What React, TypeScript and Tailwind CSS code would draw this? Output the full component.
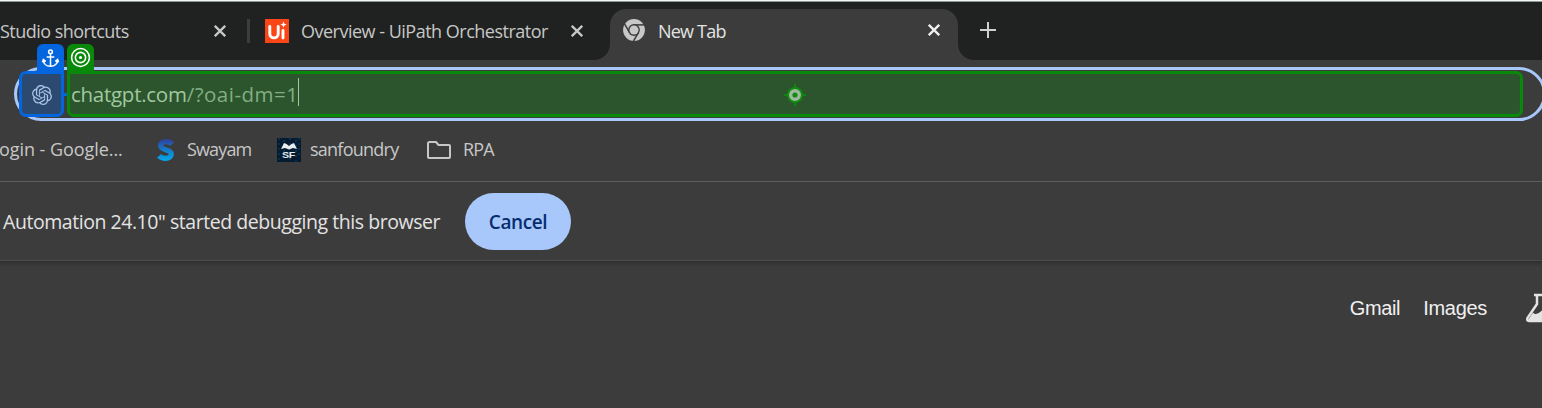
import React from "react";
import { SiOpenai } from "react-icons/si";

function Close({ className }: { className: string }) {
  return (
    <svg viewBox="0 0 12 12" className={className} fill="none" stroke="currentColor" strokeWidth="2.300">
      <path d="M.8.8 11.2 11.2M11.2.8.8 11.2" />
    </svg>
  );
}

function UiPathLogo() {
  return (
    <svg viewBox="0 0 24 24" className="mb-px ml-[15px] size-6 shrink-0">
      <path fill="#fa4616" d="M0 0h24v24H0z" />
      <path d="M4.800 7.500v7.200a4.200 4.200 0 0 0 8.400 0V7.500" fill="none" stroke="#fff" strokeWidth="2.900" strokeLinecap="round" />
      <path d="M18 11.500v7.500" stroke="#fff" strokeWidth="2.900" strokeLinecap="round" />
      <path fill="#fff" d="M18.500 2.500l.9 2.200 2.300.9-2.300.9-.9 2.300-.9-2.300-2.300-.9 2.300-.9z" />
    </svg>
  );
}

function ChromeLogo() {
  return (
    <svg viewBox="0 0 22 22" className="size-[22px] shrink-0">
      <circle cx="11" cy="11" r="10.900" fill="#c8c8c8" />
      <circle cx="11" cy="11" r="5.900" fill="#3c3c3c" />
      <g stroke="#3c3c3c" strokeWidth="1.500">
        <path d="M11 5.900h11" />
        <path d="M11 5.900h11" transform="rotate(120 11 11)" />
        <path d="M11 5.900h11" transform="rotate(240 11 11)" />
      </g>
      <circle cx="11" cy="11" r="4.500" fill="#c8c8c8" />
    </svg>
  );
}

function TabStrip() {
  return (
    <div className="flex h-[60px] shrink-0 border-t border-[#f4f6f5] bg-[#202221] text-[#c7c7c7]">
      <div className="flex h-full w-full items-center border-t border-[#8a9a94]">
        <span className="w-[214px] shrink-0 pt-px text-[18px] tracking-[-0.53px]">Studio shortcuts</span>
        <Close className="mb-px size-3 shrink-0" />
        <span className="mb-px ml-[21px] h-6 w-[3px] shrink-0 bg-[#3d3d3d]" />
        <UiPathLogo />
        <span className="ml-3 w-[270px] shrink-0 pt-px text-[18px] tracking-[-0.5px]">Overview - UiPath Orchestrator</span>
        <Close className="mb-px size-3 shrink-0" />
        <svg viewBox="0 0 16 16" className="ml-[11px] size-4 shrink-0 self-end">
          <path fill="#3c3c3c" d="M0 16A16 16 0 0 0 16 0v16z" />
        </svg>
        <div className="flex h-[51px] w-[348px] shrink-0 items-center self-end rounded-t-[16px] bg-[#3c3c3c] pb-[9px] pl-[13px]">
          <ChromeLogo />
          <span className="ml-[13px] w-[270px] pt-[3px] text-[18px] tracking-[-0.8px] text-[#e3e3e3]">New Tab</span>
          <Close className="size-3 text-[#f0f0f0]" />
        </div>
        <svg viewBox="0 0 16 16" className="size-4 shrink-0 self-end">
          <path fill="#3c3c3c" d="M16 16A16 16 0 0 1 0 0v16z" />
        </svg>
        <svg viewBox="0 0 16 16" className="mb-[2px] ml-[6px] size-4 shrink-0" stroke="#d0d0d0" strokeWidth="2">
          <path d="M8 0v16M0 8h16" />
        </svg>
      </div>
    </div>
  );
}

function AddressBar() {
  return (
    <div className="relative ml-[14px] mt-[7px] flex h-[54px] w-[1532px] shrink-0 items-center rounded-full border-[3px] border-[#a8c7fa]">
      <div className="absolute left-[2px] top-[1px] flex h-[46px] w-[45px] items-center justify-center rounded-[7px] rounded-tr-none border-[3px] border-[#0366de] bg-[#2c4a70] pt-px">
        <SiOpenai className="size-5 text-[#a9c6e6]" />
      </div>
      <div className="absolute -top-[26px] left-[20px] flex h-7 w-[27px] items-center justify-center rounded-t-[6px] bg-[#0366de]">
        <svg viewBox="0 0 18 20" className="size-[19px]" fill="none" stroke="#fff" strokeWidth="1.600">
          <circle cx="9" cy="3" r="2" />
          <path d="M9 5v13M5 8.500h8M1.500 11.500c0 4 3 6.700 7.500 6.700s7.500-2.700 7.500-6.700M.5 14l1-3 2.500 2M17.500 14l-1-3-2.500 2" />
        </svg>
      </div>
      <div className="absolute left-[47px] top-[23px] h-[3px] w-[4px] bg-[#0366de]" />
      <div className="absolute left-[50px] top-[1px] flex h-[46px] w-[1456px] items-center rounded-[7px] rounded-tl-none border-[3px] border-[#098909] bg-[#2c552e]">
        <span className="ml-[1px] whitespace-nowrap pt-px text-[20.5px] tracking-[-0.27px] text-[#a0c99f]">
          chatgpt.com<span className="tracking-[0.5px] text-[#82ae82]">/?oai-dm=1</span>
        </span>
        <span className="mb-1 h-7 w-px bg-[#a0c99f]" />
        <svg viewBox="0 0 22 22" className="absolute left-[713.5px] top-[9.5px] size-[22px]">
          <path d="M11 0v22M0 11h22" stroke="#108510" strokeWidth="2" />
          <circle cx="11" cy="11" r="8" fill="#108c10" />
          <circle cx="11" cy="11" r="4.300" fill="none" stroke="#9fb8a0" strokeWidth="3.400" />
        </svg>
      </div>
      <div className="absolute -top-[26px] left-[50px] flex h-[30px] w-[27px] rounded-t-[6px] bg-[#098909] pl-[3px] pt-[3px]">
        <svg viewBox="0 0 20 20" className="size-[21px]" fill="none" stroke="#fff" strokeWidth="1.500">
          <circle cx="10" cy="10" r="8.500" />
          <circle cx="10" cy="10" r="4.900" />
          <circle cx="10" cy="10" r="1.500" fill="#fff" stroke="none" />
        </svg>
      </div>
    </div>
  );
}

function Bookmarks() {
  return (
    <div className="flex h-[61px] shrink-0 items-center whitespace-nowrap border-b border-[#5e5e5e] pb-[3px] text-[18px] tracking-[-0.3px] text-[#c7c7c7]">
      <span className="-ml-px w-[158px] tracking-[-0.06px]">ogin - Google...</span>
      <svg viewBox="0 0 17 22" className="h-[22px] w-[17px]" fill="none">
        <defs>
          <linearGradient id="swayam" gradientUnits="userSpaceOnUse" x1="0" y1="0" x2="0" y2="22">
            <stop stopColor="#313f9e" />
            <stop offset=".5" stopColor="#147cc8" />
            <stop offset="1" stopColor="#05a9ea" />
          </linearGradient>
        </defs>
        <path d="M15 5.200C13.500 3.500 11.500 2.700 9 2.700 5.800 2.700 3.700 4.200 3.700 6.600c0 5.500 10.600 3 10.600 8.400 0 2.800-2.400 4.300-5.700 4.300-2.700 0-5-.8-6.500-2.500" stroke="url(#swayam)" strokeWidth="5.300" />
      </svg>
      <span className="ml-[13px] w-[90px] tracking-[-0.85px]">Swayam</span>
      <svg viewBox="0 0 24 24" className="size-6">
        <path fill="#041b30" d="M0 0h24v24H0z" />
        <path stroke="#0c4467" strokeDasharray="2 3" d="M2 0v24M7 2v20M13 0v23M19 2v22M22 0v20" />
        <path fill="#e8edf0" d="M4 11 7 5l2.500 1L12 8l2.500-2L17 5l3 6-4-1-4 1.500L8 10z" />
        <text x="11.500" y="19.500" textAnchor="middle" fontSize="9" fontWeight="700" fontFamily="Liberation Sans, sans-serif" textLength="13" lengthAdjust="spacingAndGlyphs" fill="#e2e8ec">SF</text>
      </svg>
      <span className="ml-[9px] w-[117px] tracking-[-0.75px]">sanfoundry</span>
      <svg viewBox="0 0 24 18" className="h-[18px] w-6" fill="none" stroke="#c7c7c7" strokeWidth="2" strokeLinejoin="round">
        <path d="M2.500 1H9l2.500 3H22q1 0 1 1v11q0 1-1 1H2q-1 0-1-1V2.500Q1 1 2.500 1z" />
      </svg>
      <span className="ml-3 tracking-[-0.9px]">RPA</span>
    </div>
  );
}

export default function App() {
  return (
    <div className="flex h-[408px] w-full flex-col overflow-hidden whitespace-nowrap bg-[#3c3c3c] font-['Open_Sans','Noto_Sans',sans-serif]">
      <TabStrip />
      <AddressBar />
      <Bookmarks />
      <div className="flex h-[79px] shrink-0 items-center border-b border-[#4b4b4b] pl-[3px] pt-px text-[19.5px] text-[#e3e3e3]">
        <span className="w-[462px] tracking-[-0.45px]">Automation 24.10" started debugging this browser</span>
        <button className="h-[57px] w-[106px] rounded-full bg-[#a8c7fa] pt-px text-[19px] font-semibold tracking-[-0.4px] text-[#062e6f]">Cancel</button>
      </div>
      <div className="h-[6px] shrink-0 bg-linear-to-b from-[#303030] to-[#3c3c3c]" />
      <div className="flex h-[82px] items-center justify-end font-['Liberation_Sans',sans-serif] text-[20px] text-[#f0f0f0]">
        <span className="tracking-[-0.35px]">Gmail</span>
        <span className="ml-[23px] tracking-[-0.3px]">Images</span>
        <svg viewBox="0 0 16 30" className="ml-[39px] h-[30px] w-4" fill="none" stroke="#e3e3e3" strokeWidth="2.500">
          <path d="M8 2h8M11 2v9L1.500 25q-1 3 1.500 3h13" />
          <path d="M2 27 7 19.500q.8 1.500 3 1.500 2.500-.2 6-3.500V28H3z" fill="#e3e3e3" stroke="none" />
        </svg>
      </div>
    </div>
  );
}
